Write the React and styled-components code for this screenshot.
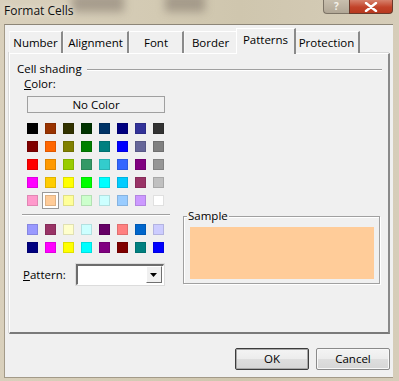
import React from 'react';
import styled, { createGlobalStyle } from 'styled-components';

const GlobalStyle = createGlobalStyle`
  html, body {
    margin: 0;
    padding: 0;
    background: #d6cdb8;
  }
  body {
    font-family: "Open Sans", "Noto Sans", "DejaVu Sans", sans-serif;
    font-size: 11.5px;
    line-height: 14px;
    color: #000;
  }
`;

const palette = [
  ['#000000', '#993300', '#333300', '#003300', '#003366', '#000080', '#333399', '#333333'],
  ['#800000', '#FF6600', '#808000', '#008000', '#008080', '#0000FF', '#666699', '#808080'],
  ['#FF0000', '#FF9900', '#99CC00', '#339966', '#33CCCC', '#3366FF', '#800080', '#969696'],
  ['#FF00FF', '#FFCC00', '#FFFF00', '#00FF00', '#00FFFF', '#00CCFF', '#993366', '#C0C0C0'],
  ['#FF99CC', '#FFCC99', '#FFFF99', '#CCFFCC', '#CCFFFF', '#99CCFF', '#CC99FF', '#FFFFFF'],
];

const chartColors = [
  ['#9999FF', '#993366', '#FFFFCC', '#CCFFFF', '#660066', '#FF8080', '#0066CC', '#CCCCFF'],
  ['#000080', '#FF00FF', '#FFFF00', '#00FFFF', '#800080', '#800000', '#008080', '#0000FF'],
];

const tabs = ['Number', 'Alignment', 'Font', 'Border', 'Patterns', 'Protection'];
const tabWidths = [54, 66, 55, 54, 60, 66];

function Grid({ rows, selected, top }) {
  return (
    <SwatchGrid $top={top}>
      {rows.flat().map((c, i) => (
        <Cell key={i} $active={selected === i}>
          <Swatch $color={c} />
        </Cell>
      ))}
    </SwatchGrid>
  );
}

export default function App() {
  return (
    <>
      <GlobalStyle />
      <Window>
        <TitleBar>
          <Title>Format Cells</Title>
          <Blur />
          <Blur $left={165} $width={40} />
          <Caption>
            <HelpBtn>?</HelpBtn>
            <CloseBtn>
              <svg width="14" height="10" viewBox="0 0 14 10">
                <path d="M2 1 L12 9 M12 1 L2 9" stroke="#fff" strokeWidth="2.4" strokeLinecap="round" />
              </svg>
            </CloseBtn>
          </Caption>
        </TitleBar>
        <Client>
          <TabStrip>
            {tabs.map((t, i) => (
              <Tab key={t} $active={t === 'Patterns'} $w={tabWidths[i]}>
                {t}
              </Tab>
            ))}
          </TabStrip>
          <Panel>
            <GroupHead>
              <span>Cell shading</span>
              <Etched />
            </GroupHead>
            <Body>
              <LeftCol>
                <Label $indent={7}>
                  <u>C</u>olor:
                </Label>
                <NoColor>No Color</NoColor>
                <Grid rows={palette} selected={33} top={7} />
                <Separator />
                <Grid rows={chartColors} top={5} />
                <PatternRow>
                  <Label>
                    <u>P</u>attern:
                  </Label>
                  <Combo>
                    <ComboArrow>
                      <svg width="7" height="4" viewBox="0 0 7 4">
                        <path d="M0 0 H7 L3.5 4 Z" fill="#000" />
                      </svg>
                    </ComboArrow>
                  </Combo>
                </PatternRow>
              </LeftCol>
              <SampleBox>
                <SampleLegend>Sample</SampleLegend>
                <SampleFill />
              </SampleBox>
            </Body>
          </Panel>
          <Buttons>
            <Button $default>OK</Button>
            <Button>Cancel</Button>
          </Buttons>
        </Client>
      </Window>
    </>
  );
}

const Window = styled.div`
  width: 399px;
  height: 381px;
  display: flex;
  flex-direction: column;
  background: linear-gradient(90deg, #d9d0bc 0%, #d3cab3 40%, #cfc6ae 60%, #d6cdb9 100%);
  overflow: hidden;
`;

const TitleBar = styled.div`
  position: relative;
  height: 24px;
  flex: none;
  display: flex;
  align-items: center;
`;

const Title = styled.div`
  position: relative;
  z-index: 1;
  margin-left: 4px;
  margin-top: -3px;
  font-size: 12px;
  color: #101010;
  text-shadow: 0 0 6px rgba(255, 255, 255, 0.8);
`;

const Blur = styled.div`
  position: absolute;
  left: ${(p) => p.$left ?? 72}px;
  top: -6px;
  width: ${(p) => p.$width ?? 52}px;
  height: 18px;
  background: rgba(110, 100, 90, 0.45);
  filter: blur(4px);
`;

const Caption = styled.div`
  position: absolute;
  right: 6px;
  top: 0;
  display: flex;
  height: 14px;
`;

const HelpBtn = styled.div`
  width: 26px;
  height: 14px;
  box-sizing: border-box;
  border: 1px solid #7d7466;
  border-top: none;
  border-right: none;
  border-radius: 0 0 0 4px;
  background: linear-gradient(#c8bfae, #b1a796);
  color: #f4f0e8;
  font-size: 10px;
  font-weight: bold;
  line-height: 12px;
  text-align: center;
`;

const CloseBtn = styled.div`
  width: 44px;
  height: 14px;
  box-sizing: border-box;
  border: 1px solid #6a3a2c;
  border-top: none;
  border-radius: 0 0 4px 0;
  background: linear-gradient(#d6816c, #c2432a 55%, #b8391f);
  display: flex;
  align-items: center;
  justify-content: center;
`;

const Client = styled.div`
  flex: 1;
  margin: 0 6px 3px 4px;
  background: #f0f0f0;
  border-top: 1px solid #8c8577;
  border-left: 1px solid #a39a88;
  border-bottom: 1px solid #a39a88;
  display: flex;
  flex-direction: column;
  padding: 3px 3px 0 4px;
`;

const TabStrip = styled.div`
  display: flex;
  align-items: flex-end;
  height: 25px;
  position: relative;
  z-index: 1;
`;

const Tab = styled.div`
  width: ${(p) => p.$w}px;
  height: ${(p) => (p.$active ? 26 : 22)}px;
  margin: ${(p) => (p.$active ? '0 -2px -1px -2px' : '0')};
  box-sizing: border-box;
  border-top: 1px solid #fff;
  border-left: 1px solid ${(p) => (p.$active ? '#fff' : '#f7f7f7')};
  border-right: 2px solid #8a8a8a;
  background: #f0f0f0;
  display: flex;
  align-items: center;
  justify-content: center;
  padding-bottom: ${(p) => (p.$active ? 3 : 0)}px;
  position: relative;
  z-index: ${(p) => (p.$active ? 2 : 1)};
`;

const Panel = styled.div`
  width: 381px;
  height: 281px;
  box-sizing: border-box;
  border-top: 1px solid #fff;
  border-left: 1px solid #fff;
  border-right: 2px solid #8a8a8a;
  border-bottom: 2px solid #7a7a7a;
  box-shadow: -1px -1px 0 #d8d8d8;
  padding: 8px 6px 0 7px;
  display: flex;
  flex-direction: column;
`;

const GroupHead = styled.div`
  display: flex;
  align-items: center;
  gap: 5px;
  height: 14px;
`;

const Etched = styled.div`
  flex: 1;
  height: 0;
  margin-top: 2px;
  border-top: 1px solid #a0a0a0;
  border-bottom: 1px solid #fff;
`;

const Body = styled.div`
  display: flex;
  gap: 12px;
`;

const LeftCol = styled.div`
  width: 154px;
  display: flex;
  flex-direction: column;
`;

const Label = styled.div`
  margin-left: ${(p) => p.$indent || 0}px;
  margin-top: ${(p) => (p.$indent ? 1 : 0)}px;
`;

const NoColor = styled.div`
  margin: 5px 0 0 10px;
  width: 138px;
  height: 17px;
  box-sizing: border-box;
  border: 1px solid #a0a0a0;
  display: flex;
  align-items: center;
  justify-content: center;
`;

const SwatchGrid = styled.div`
  display: grid;
  grid-template-columns: repeat(8, 18px);
  grid-auto-rows: 18px;
  margin: ${(p) => p.$top}px 0 0 7px;
`;

const Cell = styled.div`
  display: flex;
  align-items: center;
  justify-content: center;
  width: 17px;
  height: 17px;
  box-sizing: border-box;
  border: 1px solid ${(p) => (p.$active ? '#9a9a9a' : 'transparent')};
  background: ${(p) => (p.$active ? '#fff' : 'transparent')};
`;

const Swatch = styled.div`
  width: 11px;
  height: 11px;
  box-sizing: border-box;
  background: ${(p) => p.$color};
  border: 1px solid rgba(0, 0, 0, 0.12);
`;

const Separator = styled.div`
  margin: 4px 0 0 5px;
  width: 148px;
  border-top: 1px solid #a0a0a0;
  border-bottom: 1px solid #fff;
`;

const PatternRow = styled.div`
  display: flex;
  align-items: center;
  margin: 7px 0 0 6px;
  gap: 10px;
`;

const Combo = styled.div`
  width: 88px;
  height: 21px;
  box-sizing: border-box;
  border-top: 2px solid #6d6d6d;
  border-left: 2px solid #6d6d6d;
  border-right: 1px solid #fff;
  border-bottom: 1px solid #fff;
  box-shadow: 0 0 0 1px #dcdcdc;
  background: #fff;
  display: flex;
  justify-content: flex-end;
  padding: 0 1px 1px 0;
`;

const ComboArrow = styled.div`
  width: 16px;
  height: 17px;
  box-sizing: border-box;
  background: #f0f0f0;
  border-top: 1px solid #fff;
  border-left: 1px solid #fff;
  border-right: 1px solid #707070;
  border-bottom: 1px solid #707070;
  display: flex;
  align-items: center;
  justify-content: center;
`;

const SampleBox = styled.div`
  position: relative;
  margin-top: 140px;
  width: 197px;
  height: 68px;
  box-sizing: border-box;
  border: 1px solid #a0a0a0;
  box-shadow: inset 1px 1px 0 #fff, 1px 1px 0 #fff;
  padding: 10px 5px 4px 6px;
  display: flex;
`;

const SampleLegend = styled.span`
  position: absolute;
  left: 3px;
  top: -8px;
  padding: 0 1px;
  background: #f0f0f0;
`;

const SampleFill = styled.div`
  flex: 1;
  background: #ffcc99;
`;

const Buttons = styled.div`
  display: flex;
  justify-content: flex-end;
  gap: 7px;
  width: 381px;
  margin-top: 14px;
`;

const Button = styled.div`
  width: 74px;
  height: 22px;
  box-sizing: border-box;
  border: 1px solid ${(p) => (p.$default ? '#3c3c3c' : '#8a8a8a')};
  box-shadow: ${(p) => (p.$default ? 'inset 0 0 0 1px #a8a8a8' : 'inset 0 0 0 1px #f8f8f8')};
  border-radius: 2px;
  background: linear-gradient(#f4f4f4 0%, #ececec 50%, #dedede 51%, #d6d6d6 100%);
  display: flex;
  align-items: center;
  justify-content: center;
`;
